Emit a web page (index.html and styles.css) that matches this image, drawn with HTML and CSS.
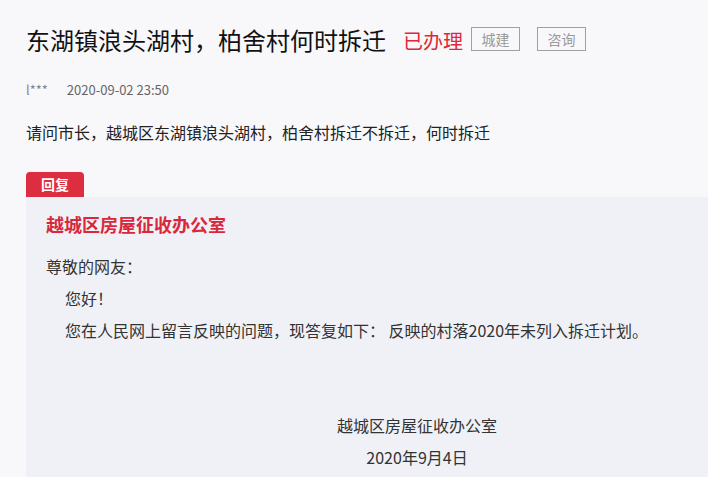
FILE: index.html
```html
<!DOCTYPE html>
<html lang="zh-CN">
<head>
  <meta charset="UTF-8" />
  <meta name="viewport" content="width=device-width, initial-scale=1.0" />
  <title>东湖镇浪头湖村，柏舍村何时拆迁</title>
  <link rel="stylesheet" href="styles.css">
</head>
<body>
  <div class="container">
    <div class="title-row">
      <h1>东湖镇浪头湖村，柏舍村何时拆迁</h1>
      <span class="state">已办理</span>
      <span class="tag">城建</span>
      <span class="tag">咨询</span>
    </div>

    <div class="meta">
      <span class="user">l***</span>
      <span class="time">2020-09-02 23:50</span>
    </div>

    <p class="question">请问市长，越城区东湖镇浪头湖村，柏舍村拆迁不拆迁，何时拆迁</p>

    <div class="reply-tab">回复</div>
    <div class="reply">
      <h2>越城区房屋征收办公室</h2>
      <p class="greet">尊敬的网友：</p>
      <p class="para">您好！</p>
      <p class="para">您在人民网上留言反映的问题，现答复如下： 反映的村落2020年未列入拆迁计划。</p>
      <div class="sign">
        <p>越城区房屋征收办公室</p>
        <p>2020年9月4日</p>
      </div>
    </div>
  </div>
</body>
</html>
```

FILE: styles.css
```css
* { margin: 0; padding: 0; box-sizing: border-box; }
body {
  font-family: "Noto Sans CJK SC", "Liberation Sans", sans-serif;
  background: #f8f7fa;
  color: #333;
}
.container {
  padding: 24px 0 0 26px;
}
.title-row {
  display: flex;
  align-items: center;
  height: 32px;
}
h1 {
  font-size: 24px;
  font-weight: normal;
  line-height: 32px;
  color: #111;
  margin-right: 17px;
}
.state {
  font-size: 20px;
  color: #e0283c;
  margin-right: 8px;
}
.tag {
  display: inline-block;
  width: 49px;
  height: 24px;
  line-height: 22px;
  border: 1px solid #a0a0a0;
  color: #999;
  font-size: 14px;
  text-align: center;
  margin-right: 17px;
  margin-top: -3px;
}
.meta {
  margin-top: 24px;
  line-height: 20px;
  font-size: 13px;
}
.user { color: #888; margin-right: 16px; }
.time { color: #666; }
.question {
  margin-top: 20px;
  line-height: 24px;
  font-size: 16px;
  color: #222;
}
.reply-tab {
  display: inline-block;
  margin-top: 28px;
  height: 25px;
  line-height: 25px;
  padding: 0 15px;
  background: #dc2d41;
  color: #fff;
  font-size: 14px;
  font-weight: bold;
  border-radius: 4px 4px 0 0;
}
.reply {
  background: #f0f1f6;
  padding: 14px 20px 4px 20px;
}
.reply h2 {
  font-size: 18px;
  line-height: 26px;
  color: #d9283c;
}
.reply p {
  font-size: 16px;
  line-height: 32px;
}
.greet { margin-top: 13px; }
.para { padding-left: 19px; }
.sign {
  margin-top: 63px;
  padding-left: 100px;
  text-align: center;
}
```
